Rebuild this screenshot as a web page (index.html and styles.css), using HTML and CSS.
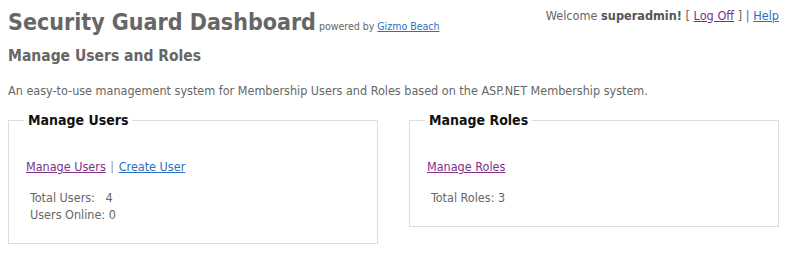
FILE: index.html
```html
<!DOCTYPE html>
<html lang="en">
<head>
    <meta charset="UTF-8">
    <title>Security Guard Dashboard</title>
    <link rel="stylesheet" href="styles.css">
</head>
<body>
    <div class="page">
        <header class="top">
            <div class="brand">
                <h1>Security Guard Dashboard</h1>
                <span class="powered">powered by <a href="#">Gizmo Beach</a></span>
            </div>
            <div class="login">
                Welcome <b>superadmin!</b> [ <a href="#" class="visited">Log Off</a> ] | <a href="#">Help</a>
            </div>
        </header>
        <h2>Manage Users and Roles</h2>
        <p class="intro">An easy-to-use management system for Membership Users and Roles based on the ASP.NET Membership system.</p>

        <div class="panels">
            <fieldset class="panel users">
                <legend>Manage Users</legend>
                <div class="links">
                    <a href="#" class="visited">Manage Users</a> <span class="sep">|</span> <a href="#">Create User</a>
                </div>
                <div class="stats">
                    Total Users:&nbsp;&nbsp; 4<br>
                    Users Online: 0
                </div>
            </fieldset>
            <fieldset class="panel roles">
                <legend>Manage Roles</legend>
                <div class="links">
                    <a href="#" class="visited">Manage Roles</a>
                </div>
                <div class="stats">
                    Total Roles: 3
                </div>
            </fieldset>
        </div>
    </div>
</body>
</html>
```

FILE: styles.css
```css
body {
    margin: 0;
    padding: 0;
    background-color: #fff;
    color: #666;
    font-family: "DejaVu Sans Condensed", "DejaVu Sans", sans-serif;
    font-size: 12.5px;
}
a {
    color: #2b6fc2;
}
a.visited {
    color: #80308a;
}
.page {
    padding: 0 21px 0 8px;
}
.top {
    display: flex;
    justify-content: space-between;
    align-items: flex-start;
}
.brand {
    display: flex;
    align-items: baseline;
    gap: 3px;
    margin-top: 9px;
}
h1 {
    margin: 0;
    font-size: 23px;
    font-weight: bold;
    color: #666;
}
.powered {
    font-size: 10.5px;
}
.login {
    margin-top: 8px;
    font-size: 12.6px;
}
.login b {
    color: #555;
}
h2 {
    margin: 12px 0 0;
    font-size: 15.5px;
    color: #666;
}
.intro {
    margin: 18px 0 0;
}
.panels {
    display: flex;
    gap: 31px;
    align-items: flex-start;
    margin-top: 14px;
}
.panel {
    margin: 0;
    width: 370px;
    box-sizing: border-box;
    border: 1px solid #ddd;
    padding: 0 17px 20px;
}
.panel legend {
    color: #111;
    font-size: 14px;
    font-weight: bold;
    padding: 0 4px;
    margin-left: -2px;
}
.links {
    margin-top: 31px;
}
.sep {
    color: #999;
    margin: 0 1px;
}
.stats {
    margin-top: 15px;
    padding-left: 4px;
    line-height: 17px;
}
```
